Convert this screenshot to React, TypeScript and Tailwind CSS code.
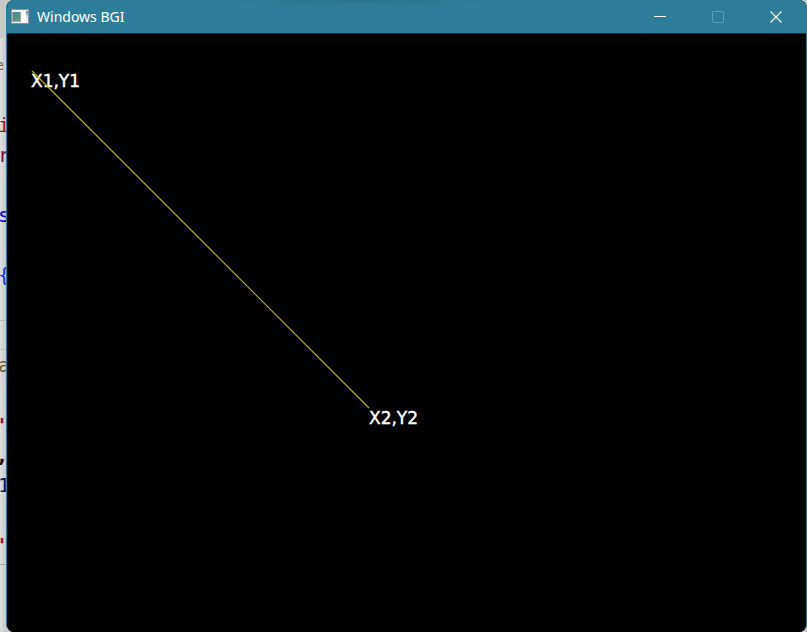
type CodeLine = { text: string; color: string; size?: "small" | "mark"; rule?: boolean };

const codeLines: CodeLine[] = [
  { text: "e", color: "text-[#8a6224]", size: "small" },
  { text: "", color: "" },
  { text: "i", color: "text-[#a31515]" },
  { text: "r", color: "text-[#8b0a3a]" },
  { text: "", color: "" },
  { text: "s", color: "text-[#0000d8]" },
  { text: "", color: "" },
  { text: "{", color: "text-[#1432ff]" },
  { text: "", color: "" },
  { text: "", color: "", rule: true },
  { text: "a", color: "text-[#7a5a26]" },
  { text: "", color: "" },
  { text: "'", color: "text-[#a31535]", size: "mark" },
  { text: ",", color: "text-[#111111]", size: "mark" },
  { text: "1", color: "text-[#101070]" },
  { text: "", color: "" },
  { text: "'", color: "text-[#a31535]", size: "mark" },
];

function lineStyle(size?: "small" | "mark") {
  if (size === "small") return "justify-end pr-0.5 text-sm";
  if (size === "mark") return "justify-center text-xl font-bold";
  return "text-xl";
}

function EditorEdge() {
  return (
    <div className="w-1.5 shrink-0 overflow-hidden bg-gradient-to-r from-[#dedede] to-[#c8c8c8] font-['DejaVu_Sans_Mono',monospace]">
      <div className="mb-3 h-[38px] bg-[#c9c9c9]" />
      {codeLines.map((line, i) => (
        <div
          key={i}
          className={`-ml-0.5 flex h-[30px] items-center ${line.color} ${lineStyle(line.size)} ${line.rule ? "border-b border-t border-[#bcbcbc]" : ""}`}
        >
          {line.text}
        </div>
      ))}
      <div className="mt-1 border-t border-[#adadad]" />
    </div>
  );
}

function AppIcon() {
  return (
    <svg width="18" height="15" viewBox="0 0 18 15" aria-hidden="true" shapeRendering="crispEdges">
      <defs>
        <linearGradient id="pane" x1="0" y1="0" x2="1" y2="1">
          <stop offset="0" stopColor="#477eae" />
          <stop offset="1" stopColor="#63a36c" />
        </linearGradient>
        <linearGradient id="side" x1="0" y1="0" x2="0" y2="1">
          <stop offset="0" stopColor="#4f9b98" />
          <stop offset="1" stopColor="#e8efec" />
        </linearGradient>
      </defs>
      <rect x="0" y="0" width="18" height="15" fill="#8d9497" />
      <rect x="1" y="1" width="16" height="13" fill="#f0eeee" />
      <rect x="1" y="3" width="9" height="10" fill="#a4adae" />
      <rect x="2" y="3" width="7" height="9" fill="url(#pane)" />
      <rect x="10" y="3" width="5" height="10" fill="#ffffff" />
      <rect x="15" y="2" width="2" height="7" fill="url(#side)" />
    </svg>
  );
}

function TitleBar() {
  return (
    <header className="flex h-[34px] items-center border-b border-[#17333f] bg-[#2d7d9a] bg-[radial-gradient(ellipse_at_top,#28758c,#2d7d9a_70%)] bg-[length:280px_6px] bg-[position:214px_0] bg-no-repeat pl-1 pr-px">
      <AppIcon />
      <h1 className="ml-2 flex-1 font-['Noto_Sans','Open_Sans',sans-serif] text-sm text-white">Windows BGI</h1>
      <button type="button" aria-label="Minimize" className="flex h-8 w-[58px] items-center justify-center">
        <svg width="12" height="12" viewBox="0 0 12 12" shapeRendering="crispEdges">
          <path d="M0 5.5H12" stroke="#fff" />
        </svg>
      </button>
      <button type="button" aria-label="Maximize" disabled className="flex h-8 w-[58px] items-center justify-center">
        <svg width="12" height="12" viewBox="0 0 12 12" fill="none">
          <rect x=".5" y=".5" width="11" height="11" rx="1" stroke="#5a9bb2" />
        </svg>
      </button>
      <button type="button" aria-label="Close" className="flex h-8 w-[58px] items-center justify-center">
        <svg width="12" height="12" viewBox="0 0 12 12">
          <path d="M.5 .5L11.5 11.5M11.5 .5L.5 11.5" stroke="#fff" strokeWidth="1.2" />
        </svg>
      </button>
    </header>
  );
}

function GraphicsCanvas() {
  return (
    <svg
      className="block w-full flex-1 bg-black font-['DejaVu_Sans',sans-serif] text-[17px]"
      role="img"
      aria-label="Line from X1,Y1 to X2,Y2"
    >
      <g fill="#fff" stroke="#fff" strokeWidth=".4">
        <text x="24" y="53">X1,Y1</text>
        <text x="362" y="390">X2,Y2</text>
      </g>
      <line x1="25" y1="37" x2="362" y2="374" stroke="#b5b500" strokeWidth="1.2" />
    </svg>
  );
}

export default function App() {
  return (
    <div className="flex h-screen overflow-hidden bg-[#c9c9c9]">
      <EditorEdge />
      <main className="flex min-w-0 flex-1 flex-col overflow-hidden rounded-lg border-x border-[#2d7d9a] bg-black">
        <TitleBar />
        <GraphicsCanvas />
      </main>
    </div>
  );
}
